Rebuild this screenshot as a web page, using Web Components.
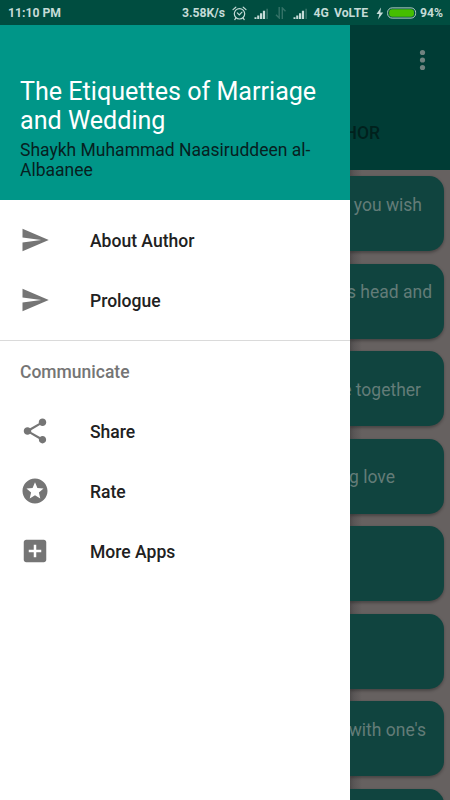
<!DOCTYPE html>
<html lang="en">
<head>
<meta charset="utf-8">
<title>The Etiquettes of Marriage and Wedding</title>
<style>
html,body{margin:0;height:100%}
body{font-family:Roboto,"Liberation Sans",sans-serif;background:#666160;overflow:hidden}
</style>
</head>
<body>
<app-screen></app-screen>
<script>
const define = (name, html) => {
  const t = document.createElement('template');
  t.innerHTML = html;
  customElements.define(name, class extends HTMLElement {
    constructor() {
      super();
      this.attachShadow({mode: 'open'}).append(t.content.cloneNode(true));
    }
  });
};

const icons = {
  send: 'M2.01 21L23 12 2.01 3 2 10l15 2-15 2z',
  share: 'M18 16.08c-.76 0-1.44.3-1.96.77L8.91 12.7c.05-.23.09-.46.09-.7s-.04-.47-.09-.7l7.05-4.11c.54.5 1.25.81 2.04.81 1.66 0 3-1.34 3-3s-1.34-3-3-3-3 1.34-3 3c0 .24.04.47.09.7L8.04 9.81C7.5 9.31 6.79 9 6 9c-1.66 0-3 1.34-3 3s1.34 3 3 3c.79 0 1.5-.31 2.04-.81l7.12 4.16c-.05.21-.08.43-.08.65 0 1.61 1.31 2.92 2.92 2.92s2.92-1.31 2.92-2.92-1.31-2.92-2.92-2.92z',
  stars: 'M11.99 2C6.47 2 2 6.48 2 12s4.47 10 9.99 10C17.52 22 22 17.52 22 12S17.52 2 11.99 2zm4.24 16L12 15.45 7.77 18l1.12-4.81-3.73-3.23 4.92-.42L12 5l1.92 4.53 4.92.42-3.73 3.23L16.23 18z',
  add: 'M19 3H5c-1.11 0-2 .9-2 2v14c0 1.1.89 2 2 2h14c1.1 0 2-.9 2-2V5c0-1.1-.9-2-2-2zm-2 10h-4v4h-2v-4H7v-2h4V7h2v4h4v2z'
};

customElements.define('md-icon', class extends HTMLElement {
  connectedCallback() {
    if (this.shadowRoot) return;
    this.attachShadow({mode: 'open'}).innerHTML = `
      <style>:host{display:block;width:30px;height:30px}svg{display:block;width:100%;height:100%;fill:#757575}</style>
      <svg viewBox="0 0 24 24"><path d="${icons[this.getAttribute('name')]}"/></svg>`;
  }
});

define('signal-bars', `
<style>:host{display:block;width:15px;height:11px}svg{display:block}</style>
<svg width="15" height="11" viewBox="0 0 15 11">
  <g fill="#c5dbd7"><path d="M.5 9.2h2V11H.5zM3.2 7.5h2.1V11H3.2zM6 5.2h2.2V11H6zM8.9 2.8h2.2V11H8.9z"/></g>
  <path d="M12.3 .8h1.7V11h-1.7z" fill="#347267"/>
</svg>`);

define('status-bar', `
<style>
:host{display:grid;grid-template-columns:182px 50px 22px 21px 18px 20.5px 20.5px 42px 11px 33px 1fr;align-items:center;height:25px;background:#004d40;color:#c5dbd7;font-size:12.2px;font-weight:700;line-height:25px;white-space:nowrap}
span{padding-top:1px}
.time{padding-left:8px}
svg{display:block}
signal-bars{margin-top:1px}
</style>
<span class="time">11:10 PM</span>
<span>3.58K/s</span>
<svg width="15" height="15" viewBox="0 0 15 15" fill="none" stroke="#c5dbd7" stroke-width="1.2" stroke-linecap="round"><circle cx="7.5" cy="7.8" r="5.2"/><path d="M1 3.6L3.8 1.2M14 3.6L11.2 1.2M5.3 6.9l2 2L10 6.2M3.8 12.2L2.8 13.6M11.2 12.2l1 1.4"/></svg>
<signal-bars></signal-bars>
<svg width="12" height="12" viewBox="0 0 12 12" fill="none" stroke="#347267" stroke-width="1.4"><path d="M4.2 0v11L1 7.8M7.3 12V1L10.5 4.2"/></svg>
<signal-bars></signal-bars>
<span>4G</span>
<span>VoLTE</span>
<svg width="8" height="13" viewBox="0 0 8 13" fill="#c5dbd7"><path d="M5 .5L.5 7h2.8L2 12.5 7.2 5.6H4.3z"/></svg>
<svg width="30" height="12" viewBox="0 0 30 12"><rect x=".6" y=".9" width="28" height="10.2" rx="4.5" fill="none" stroke="#b5d0c0" stroke-width="1"/><rect x="2.2" y="2.3" width="24.8" height="7.4" rx="3" fill="#45be00"/></svg>
<span>94%</span>`);

define('drawer-header', `
<style>
:host{display:flex;flex-direction:column;justify-content:flex-end;box-sizing:border-box;height:175px;padding:0 20px 20px;background:#009688}
.title{font-size:25.1px;line-height:29px;color:#fff}
.sub{font-size:17.5px;line-height:20px;color:#07211f;margin-top:5px}
</style>
<div class="title"><slot name="title"></slot></div>
<div class="sub"><slot></slot></div>`);

define('drawer-item', `
<style>
:host{display:grid;grid-template-columns:70px 1fr;align-items:center;height:60px;padding-left:20px;font-size:17.55px;font-weight:500;color:#212121}
span{padding-top:2px}
</style>
<slot name="icon"></slot><span><slot></slot></span>`);

define('nav-drawer', `
<style>
:host{display:block;width:350px;flex:none;background:#fff}
.group{padding-top:10px}
.more{margin-top:10px;border-top:1px solid #dadada}
h2{margin:0;padding:2px 0 0 20px;font-size:17.5px;font-weight:500;line-height:58px;color:#757575}
</style>
<drawer-header><span slot="title">The Etiquettes of Marriage and Wedding</span>Shaykh Muhammad Naasiruddeen al-Albaanee</drawer-header>
<div class="group">
  <drawer-item><md-icon slot="icon" name="send"></md-icon>About Author</drawer-item>
  <drawer-item><md-icon slot="icon" name="send"></md-icon>Prologue</drawer-item>
</div>
<div class="more">
  <h2>Communicate</h2>
  <drawer-item><md-icon slot="icon" name="share"></md-icon>Share</drawer-item>
  <drawer-item><md-icon slot="icon" name="stars"></md-icon>Rate</drawer-item>
  <drawer-item><md-icon slot="icon" name="add"></md-icon>More Apps</drawer-item>
</div>`);

define('dim-appbar', `
<style>
:host{display:flex;flex-direction:column;justify-content:space-between;height:145px;background:#003c35}
svg{display:block;align-self:flex-end;margin:24px 23px 0 0}
.tab{width:30px;display:flex;justify-content:flex-end;font-size:17.5px;font-weight:500;line-height:20px;color:#00211d;padding-bottom:27px}
</style>
<svg width="9" height="22" viewBox="0 0 9 22" fill="#70827f"><circle cx="4.5" cy="3.5" r="2.6"/><circle cx="4.5" cy="11" r="2.6"/><circle cx="4.5" cy="18.5" r="2.6"/></svg>
<div class="tab">HOR</div>`);

define('topic-card', `
<style>
:host{display:flex;flex-direction:column;justify-content:center;align-items:flex-end;box-sizing:border-box;height:75px;flex:none;margin-right:6px;border-radius:0 15px 15px 0;background:#10443f;box-shadow:0 1.5px 3px rgba(0,0,0,.28);color:#637c78;font-size:17.5px;line-height:20px;white-space:nowrap;padding-top:1.5px}
:host([lines="2"]){justify-content:flex-start;padding-top:18.5px}
</style>
<slot></slot>`);

define('dim-content', `
<style>
:host{display:block;width:100px;flex:none;overflow:hidden;background:linear-gradient(90deg,#4e4b4b,#5a5656 4px,#666160 12px)}
.list{display:flex;flex-direction:column;gap:12.5px;padding-top:6.3px}
span{margin-right:var(--r)}
</style>
<dim-appbar></dim-appbar>
<div class="list">
  <topic-card lines="2"><span style="--r:22px">you wish</span></topic-card>
  <topic-card lines="2"><span style="--r:12px">s head and</span></topic-card>
  <topic-card><span style="--r:23px">e together</span></topic-card>
  <topic-card><span style="--r:49px">g love</span></topic-card>
  <topic-card></topic-card>
  <topic-card></topic-card>
  <topic-card lines="2"><span style="--r:18px">with one's</span></topic-card>
  <topic-card></topic-card>
</div>`);

define('app-screen', `
<style>
:host{display:flex;flex-direction:column;width:450px;height:800px;overflow:hidden}
main{display:flex;flex:1;min-height:0}
</style>
<status-bar></status-bar>
<main><nav-drawer></nav-drawer><dim-content></dim-content></main>`);
</script>
</body>
</html>
